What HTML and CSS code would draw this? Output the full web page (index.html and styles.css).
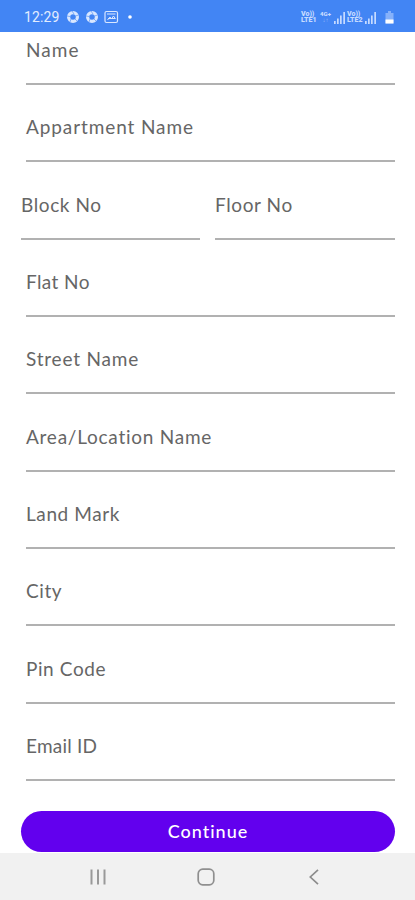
FILE: index.html
```html
<!DOCTYPE html>
<html lang="en">
<head>
<meta charset="utf-8">
<title>Address</title>
<meta name="viewport" content="width=device-width, initial-scale=1">
<link rel="stylesheet" href="styles.css">
</head>
<body>
<header class="status">
  <span class="clock">12:29</span>
  <svg class="notify" width="68" height="14" viewBox="0 0 68 14" fill="none" stroke="#d9e7ff">
    <g stroke-width="3.200"><circle cx="7" cy="7" r="4.400"/><circle cx="26" cy="7" r="4.400"/></g>
    <g stroke="#4285f4" stroke-width=".6"><path d="M6 1l2 3M12.500 5l-3 1M11 11l-2-2M4 12l1-3M1 6l3 .5M25 1l2 3M31.500 5l-3 1M30 11l-2-2M23 12l1-3M20 6l3 .5"/></g>
    <rect x="39" y="1.500" width="12.500" height="11" rx="1.500" stroke-width="1.200"/>
    <path d="M41 4h8.500M41.500 10l2.500-3 1.500 2 2-3 2 3M42 8.500h7" stroke-width="1"/>
    <circle cx="64" cy="7" r="1.800" fill="#fff" stroke="none"/>
  </svg>
  <span class="network"><b>Vo))</b><b>LTE1</b></span>
  <span class="network data"><b>4G+</b><b>↓↑</b></span>
  <svg class="signal" width="12" height="13" viewBox="0 0 12 13" fill="#c6dbff"><path d="M0 10h1.700v3H0zM3 7.500h1.700V13H3zM6 4.500h1.700V13H6zM9.300 1H11v12H9.300z"/></svg>
  <span class="network second"><b>Vo))</b><b>LTE2</b></span>
  <svg class="signal" width="12" height="13" viewBox="0 0 12 13" fill="#c6dbff"><path d="M0 10h1.700v3H0zM3 7.500h1.700V13H3zM6 4.500h1.700V13H6zM9.300 1H11v12H9.300z"/></svg>
  <svg class="battery" width="9" height="13" viewBox="0 0 9 13"><path d="M3 0h3v2h2.500v10.500h-8V2H3z" fill="#86b1fa"/><path d="M.5 8.500h8v4h-8z" fill="#fff"/></svg>
</header>
<main class="form">
  <div class="field first"><label class="name">Name</label></div>
  <div class="field"><label class="apartment">Appartment Name</label></div>
  <div class="pair">
    <div class="field"><label class="block">Block No</label></div>
    <div class="field"><label class="floor">Floor No</label></div>
  </div>
  <div class="field"><label class="flat">Flat No</label></div>
  <div class="field"><label class="street">Street Name</label></div>
  <div class="field"><label class="area">Area/Location Name</label></div>
  <div class="field"><label class="landmark">Land Mark</label></div>
  <div class="field"><label class="city">City</label></div>
  <div class="field"><label class="pin">Pin Code</label></div>
  <div class="field"><label class="email">Email ID</label></div>
  <button class="continue" type="button">Continue</button>
</main>
<nav class="nav">
  <svg width="16" height="16" viewBox="0 0 16 16" stroke="#999" stroke-width="2"><path d="M1.500 .5v15M8 .5v15M14.500 .5v15"/></svg>
  <svg width="18" height="18" viewBox="0 0 18 18" fill="none" stroke="#8f8f8f" stroke-width="1.700"><rect x="1.200" y="1.200" width="15.600" height="15.600" rx="4.500"/></svg>
  <svg width="16" height="16" viewBox="0 0 16 16" fill="none" stroke="#8c8c8c" stroke-width="1.700"><path d="M12 .8L4.300 8l7.700 7.200"/></svg>
</nav>
</body>
</html>
```
FILE: styles.css
```css
* { box-sizing: border-box; }
body {
  margin: 0;
  height: 900px;
  display: flex;
  flex-direction: column;
  overflow: hidden;
  background: #fff;
  font-family: Lato, sans-serif;
}
.status {
  height: 32px;
  flex: none;
  display: flex;
  align-items: center;
  padding: 2px 21px 0 24px;
  background: #4285f4;
  color: #e2edff;
}
.clock { width: 42px; font: 14px/16px Roboto, sans-serif; letter-spacing: .1px; }
.notify { margin-right: auto; }
.network {
  width: 17px;
  display: flex;
  flex-direction: column;
  color: #c6dbff;
  font: 700 7px/6.5px Roboto, sans-serif;
}
.network b { white-space: nowrap; }
.data { width: 15px; font-size: 6px; text-align: center; }
.data b + b { opacity: .6; }
.second { margin-left: 1px; }
.signal { margin-left: 1px; }
.battery { margin-left: 8px; }
.form {
  height: 821px;
  flex: none;
  padding: 0 20px 0 26px;
}
.field {
  height: 77.330px;
  display: flex;
  flex-direction: column;
  justify-content: flex-end;
  border-bottom: 2px solid #b1b1b1;
}
.first { height: 53px; }
.field label {
  padding-bottom: 21px;
  color: #666;
  font-size: 19px;
  line-height: 24px;
  white-space: nowrap;
  font-variant-ligatures: none;
  letter-spacing: .6px;
}
.field .name { letter-spacing: 1.1px; }
.field .apartment { letter-spacing: .9px; }
.field .flat { letter-spacing: .4px; }
.field .street { letter-spacing: .8px; }
.field .area { letter-spacing: .75px; }
.field .email { letter-spacing: .2px; }
.pair {
  display: grid;
  grid-template-columns: 179px 180px;
  gap: 15px;
  margin-left: -5px;
}
.continue {
  display: block;
  width: 374px;
  height: 41px;
  margin: 30px 0 0 -5px;
  padding: 0 0 1px;
  border: 0;
  border-radius: 21px;
  background: #6200ee;
  color: #fff;
  font: 500 18px/24px Lato, sans-serif;
  letter-spacing: 1px;
}
.nav {
  flex: 1;
  display: flex;
  justify-content: space-between;
  align-items: center;
  padding: 0 93px 0 90px;
  background: #f1f1f1;
}
```
